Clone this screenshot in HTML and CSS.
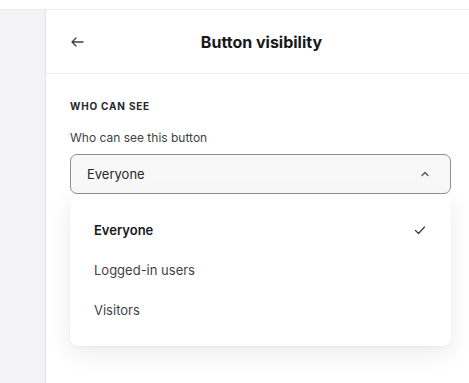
FILE: index.html
```html
<!DOCTYPE html>
<html lang="en">
<head>
    <meta charset="UTF-8">
    <meta name="viewport" content="width=device-width, initial-scale=1.0">
    <title>Button visibility</title>
    <link rel="stylesheet" href="styles.css">
</head>
<body>
    <div class="topbar"></div>
    <div class="layout">
        <div class="sidebar"></div>
        <div class="panel">
            <div class="panel-header">
                <button class="back-btn" aria-label="Back">
                    <svg width="14" height="14" viewBox="0 0 14 14" fill="none" stroke="#3f3f46" stroke-width="1.3" stroke-linecap="round" stroke-linejoin="round">
                        <path d="M13 7H2M6 3L2 7l4 4"/>
                    </svg>
                </button>
                <h2>Button visibility</h2>
            </div>
            <div class="panel-body">
                <h4 class="section-title">Who can see</h4>
                <label class="field-label">Who can see this button</label>
                <div class="select">
                    <span>Everyone</span>
                    <svg width="10" height="10" viewBox="0 0 10 10" fill="none" stroke="#52525b" stroke-width="1.4" stroke-linecap="round" stroke-linejoin="round">
                        <path d="M2 6.5L5 3.5l3 3"/>
                    </svg>
                </div>
                <ul class="menu">
                    <li class="selected">
                        <span>Everyone</span>
                        <svg width="14" height="14" viewBox="0 0 14 14" fill="none" stroke="#3f3f46" stroke-width="1.3" stroke-linecap="round" stroke-linejoin="round">
                            <path d="M2.5 7.5l3 3 6-6.5"/>
                        </svg>
                    </li>
                    <li><span>Logged-in users</span></li>
                    <li><span>Visitors</span></li>
                </ul>
            </div>
        </div>
    </div>
</body>
</html>
```

FILE: styles.css
```css
* {
    box-sizing: border-box;
}

body {
    margin: 0;
    font-family: 'Inter', sans-serif;
    background-color: #ffffff;
    color: #18181b;
}

.topbar {
    height: 10px;
    border-bottom: 1px solid #ececee;
    background-color: #ffffff;
}

.layout {
    display: flex;
    height: 373px;
}

.sidebar {
    width: 46px;
    background-color: #f3f3f6;
    border-right: 1px solid #e4e4e7;
}

.panel {
    flex: 1;
    background-color: #ffffff;
}

.panel-header {
    position: relative;
    height: 64px;
    display: flex;
    align-items: center;
    justify-content: center;
    padding-left: 8px;
    border-bottom: 1px solid #ececee;
}

.back-btn {
    position: absolute;
    left: 24px;
    top: 25px;
    padding: 0;
    border: none;
    background: none;
    display: flex;
}

.panel-header h2 {
    margin: 0;
    font-size: 16px;
    font-weight: 700;
    color: #18181b;
}

.panel-body {
    padding: 26px 18px 0 24px;
}

.section-title {
    margin: 0 0 18px;
    font-size: 10px;
    font-weight: 700;
    letter-spacing: 0.08em;
    text-transform: uppercase;
    color: #27272a;
}

.field-label {
    display: block;
    margin-bottom: 9px;
    font-size: 12px;
    color: #3f3f46;
}

.select {
    height: 40px;
    display: flex;
    align-items: center;
    justify-content: space-between;
    padding: 0 20px 0 16px;
    border: 1px solid #8e8e96;
    border-radius: 7px;
    background-color: #f8f8f9;
    font-size: 13px;
    color: #27272a;
}

.menu {
    list-style: none;
    margin: 0;
    padding: 16px 24px 16px 24px;
    background-color: #ffffff;
    border-radius: 8px;
    box-shadow: 0 8px 24px rgba(0, 0, 0, 0.08), 0 1px 3px rgba(0, 0, 0, 0.04);
}

.menu li {
    height: 40px;
    display: flex;
    align-items: center;
    justify-content: space-between;
    font-size: 13px;
    color: #3f3f46;
}

.menu li.selected {
    font-weight: 600;
    color: #18181b;
}
```
